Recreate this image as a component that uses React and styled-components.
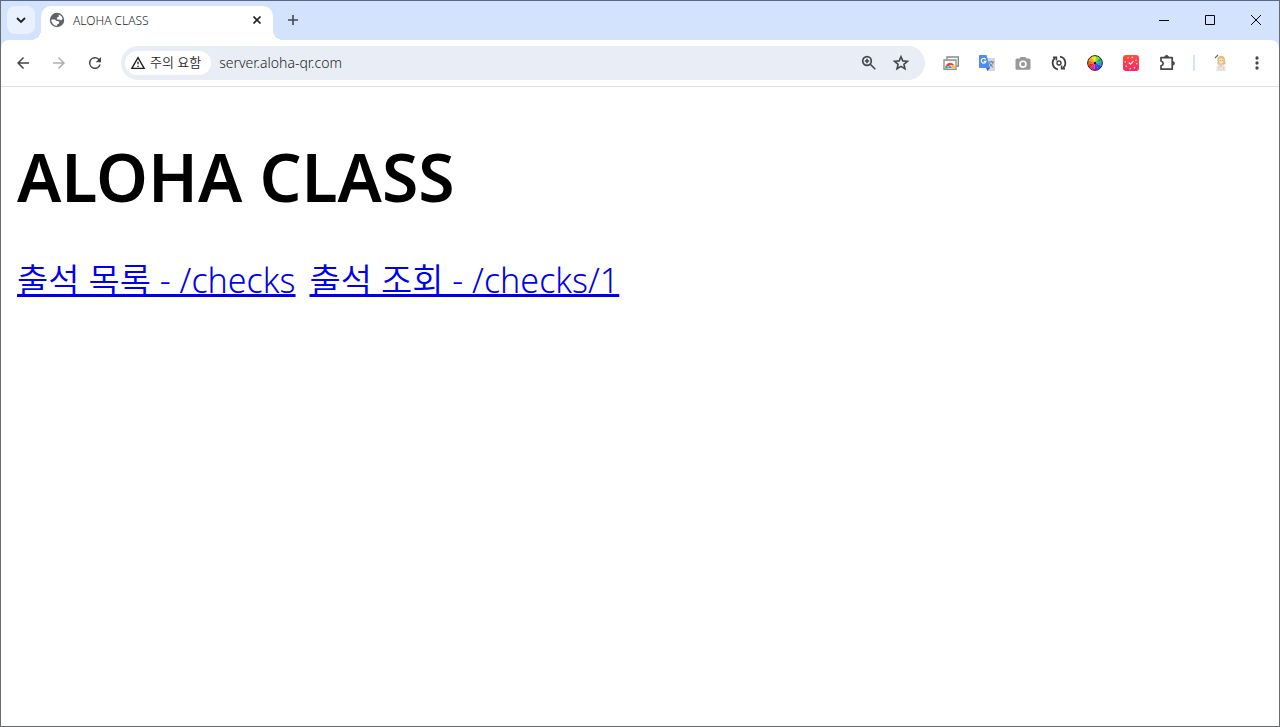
import styled, { createGlobalStyle, css } from 'styled-components';
import { useState } from 'react';

const GlobalStyle = createGlobalStyle`
    *, *::before, *::after {
        box-sizing: border-box;
    }

    body {
        margin: 0;
        background-color: #fff;
        font-family: "Noto Sans", "Noto Sans CJK KR", sans-serif;
    }

    button, input {
        font: inherit;
    }
`;

const Window = styled.div`
    display: flex;
    flex-direction: column;
    min-height: 100vh;
    border: 1px solid #686a70;
    border-top-color: #596788;
    background-color: #d3e3fd;
`;

const TabStrip = styled.header`
    display: flex;
    align-items: flex-start;
    height: 39px;
    padding-left: 6px;
`;

const IconButton = styled.button`
    display: flex;
    flex: none;
    align-items: center;
    justify-content: center;
    width: ${({ $width = 36 }) => $width}px;
    height: ${({ $height = 34 }) => $height}px;
    padding: 0;
    border: 0;
    border-radius: ${({ $radius = 8 }) => $radius}px;
    background-color: ${({ $bg = 'transparent' }) => $bg};
    color: ${({ $color = '#45474b' }) => $color};

    & > svg {
        display: block;
    }
`;

const TabSearch = styled(IconButton)`
    margin-top: 5px;
`;

const foot = css`
    content: "";
    position: absolute;
    bottom: 0;
    width: 10px;
    height: 10px;
`;

const Tab = styled.div`
    position: relative;
    display: flex;
    align-items: center;
    width: 232px;
    height: 34px;
    margin: 5px 0 0 6px;
    padding: 0 6px 6px 8px;
    border-radius: 10px 10px 0 0;
    background-color: #fff;

    &::before {
        ${foot}
        left: -10px;
        background: radial-gradient(circle at 0 0, transparent 10px, #fff 10px);
    }

    &::after {
        ${foot}
        right: -10px;
        background: radial-gradient(circle at 100% 0, transparent 10px, #fff 10px);
    }
`;

const TabTitle = styled.span`
    flex: 1;
    margin-left: 8px;
    padding-top: 2px;
    color: #1f1f1f;
    font-size: 12px;
    font-weight: 350;
    line-height: 20px;
`;

const NewTab = styled(IconButton)`
    margin: 5px 0 0 6px;
`;

const WindowControls = styled.div`
    display: flex;
    margin-left: auto;
`;

const Toolbar = styled.nav`
    display: flex;
    align-items: center;
    padding: 6px 4px;
    border-bottom: 1px solid #dfe1e5;
    border-radius: 8px 8px 0 0;
    background-color: #fff;
`;

const AddressBar = styled.div`
    display: flex;
    flex: 1;
    align-items: center;
    min-width: 0;
    height: 34px;
    margin: 0 8px;
    padding: 0 8px 0 4px;
    border-radius: 17px;
    background-color: #e9eef6;
`;

const SiteStatus = styled.button`
    display: flex;
    flex: none;
    align-items: center;
    gap: 4px;
    height: 24px;
    padding: 0 10px 0 5px;
    border: 0;
    border-radius: 12px;
    background-color: #fff;
    color: #1f1f1f;
    font-size: 13px;
    font-weight: 350;
    line-height: 24px;

    & > span {
        padding-bottom: 2px;
    }
`;

const AddressInput = styled.input`
    flex: 1;
    min-width: 0;
    margin-left: 8px;
    padding: 0;
    border: 0;
    outline: 0;
    background: transparent;
    color: #1f1f1f;
    font-size: 14px;
    font-weight: 350;
    line-height: 20px;
`;

const Divider = styled.span`
    width: 2px;
    height: 16px;
    margin: 0 8px;
    background-color: #d3e3fd;
`;

const Page = styled.main`
    flex: 1;
    padding: 0 16px;
    background-color: #fff;
`;

const Title = styled.h1`
    margin: 46px 0 40px;
    color: #000;
    font-size: 66px;
    font-weight: 600;
    line-height: 86px;
`;

const Links = styled.div`
    display: flex;
    flex-wrap: wrap;
    gap: 14px;
`;

const PageLink = styled.a`
    color: #0000ee;
    font-size: 34px;
    font-weight: 350;
    line-height: 42px;
    text-decoration-thickness: 3px;
    text-underline-offset: 1px;
    text-decoration-skip-ink: none;
`;

const Material = ({ d, size = 18, view = '0 0 24 24' }) => (
    <svg width={size} height={size} viewBox={view} fill="currentColor" aria-hidden="true">
        <path d={d} />
    </svg>
);

const Line = ({ d, size = 16, width = 2 }) => (
    <svg width={size} height={size} viewBox={`0 0 ${size} ${size}`} fill="none"
        stroke="currentColor" strokeWidth={width} aria-hidden="true">
        <path d={d} />
    </svg>
);

const GlobeIcon = () => (
    <svg width="16" height="16" viewBox="0 0 16 16" aria-hidden="true">
        <circle cx="8" cy="8" r="7.2" fill="#5f6368" />
        <path fill="#fff" d="M9.6 2.4c2.2.6 3.7 2.2 4 4.4L12.2 8.4l-1.7-.9-2.1.2-.6-1.5 1-1.2 1.2-.4z" />
        <path fill="#fff" d="M2.3 7.4h3.5L7.7 9l2.6.5-.3 2-1.7.7-.2 1.5c-3.3 0-5.8-2.6-5.8-6.3" />
    </svg>
);

const PhotosIcon = () => (
    <svg width="18" height="18" viewBox="0 0 18 18" fill="none" aria-hidden="true">
        <path d="M5 5.5V3h11.3v9h-2" stroke="#888b8e" strokeWidth="1.4" />
        <path d="M2 6h12v9.3H2z" fill="#fff" stroke="#888b8e" strokeWidth="1.3" />
        <path d="M3.8 11.2a4.9 4.9 0 0 1 8.6 0H8L6.4 13z" fill="#ea4335" />
        <path d="M3.8 11.2a5 5 0 0 0-.5 3.4H6V13z" fill="#34a853" />
        <path d="M12.4 11.2H9.6q.9 1.6.4 3.4h2.8q.4-1.8-.4-3.4" fill="#fbbc04" />
        <path d="M6 14.6a2.1 2.1 0 1 1 4 0z" fill="#4285f4" stroke="#fff" strokeWidth=".5" />
    </svg>
);

const TranslateIcon = () => (
    <svg width="18" height="18" viewBox="0 0 18 18" fill="none" aria-hidden="true">
        <path d="M7 4h9.3q.7 0 .7.7v11.6q0 .7-.7.7H10z" fill="#d5d8dc" />
        <path d="m8 14 4 0-2.4 3z" fill="#3367d6" />
        <path d="M1.8 1h6.7L12 14H1.8q-.8 0-.8-.8V1.8Q1 1 1.8 1" fill="#4c8bf5" />
        <path d="M7.6 5.3A2.4 2.4 0 1 0 8 7.3H5.8" stroke="#fff" strokeWidth="1.2" />
        <path d="M10.5 8H16m-2.8-1v1m1.8.3c-.5 2-2 3.6-3.4 4.5m-.1-3.7c.7 1.7 2 3 3.5 4.1" stroke="#5d7895" />
    </svg>
);

const SyncIcon = () => (
    <svg width="18" height="18" viewBox="0 0 18 18" fill="none" stroke="#3c4043" strokeWidth="1.8" aria-hidden="true">
        <path d="M8 15.3A6.4 6.4 0 0 1 5.2 3.9M10 2.7A6.4 6.4 0 0 1 12.8 14.1" />
        <path d="M3 3.2h3.4v3.4M15 14.8h-3.4v-3.4" strokeWidth="1.6" />
        <circle cx="9" cy="9" r="2" strokeWidth="1.4" />
    </svg>
);

const wheelColors = ['#f9ed20', '#8edb22', '#16b84e', '#18a5dc', '#2749e8', '#702ad8', '#ee2494', '#ef2525', '#f3661d', '#f7a61b'];

const WheelIcon = () => (
    <svg width="18" height="18" viewBox="-9 -9 18 18" aria-hidden="true">
        {wheelColors.map((color, i) => (
            <path key={color} d="M0 0V-7.2A7.2 7.2 0 0 1 4.3-5.8Z" fill={color} transform={`rotate(${i * 36 - 30})`} />
        ))}
        <circle r="7.4" fill="none" stroke="#242424" />
        <circle r="1.2" fill="#171717" />
    </svg>
);

const ClockIcon = () => (
    <svg width="18" height="18" viewBox="0 0 18 18" fill="none" aria-hidden="true">
        <defs>
            <linearGradient id="clock" x1="0" y1="0" x2="0" y2="1">
                <stop stopColor="#ff5038" />
                <stop offset="1" stopColor="#fc2668" />
            </linearGradient>
        </defs>
        <rect x="1" y="1" width="16" height="16" rx="3" fill="url(#clock)" />
        <circle cx="9" cy="9" r="5.8" stroke="#ffe1dd" strokeWidth="1.4" strokeDasharray="1.4 3.155" />
        <path d="m6.8 8.6 1.7 1.6 3-3" stroke="#fff" strokeWidth="1.2" />
    </svg>
);

const PuzzleIcon = () => (
    <svg width="18" height="18" viewBox="0 0 18 18" fill="none" stroke="currentColor" aria-hidden="true">
        <path d="M3 3.6h11.2v11.6H3v-3.4c2.9-.9 2.9-3.9 0-4.8z" strokeWidth="1.7" strokeLinejoin="round" />
        <path d="M6.8 3.2a1.8 1.8 0 0 1 3.6 0zM14.6 7.6a1.8 1.8 0 0 1 0 3.6z" fill="currentColor" />
    </svg>
);

const AvatarIcon = () => (
    <svg width="20" height="20" viewBox="0 0 20 20" fill="none" aria-hidden="true">
        <path d="m4 5 3-3" stroke="#64615f" strokeWidth="1.1" />
        <path d="M6.3 8q-.5-4.8 3.8-5.2 4 .1 4 4.3l.5 3.8-2.5 1H8l-1.5-1z" fill="#dec178" />
        <ellipse cx="10.1" cy="8" rx="2.3" ry="2.8" fill="#ffe0c8" />
        <path d="M8.8 7.6h.8m1.2 0h.8" stroke="#8b6a50" strokeWidth=".8" />
        <path d="m5 18 1.1-5 2.6-1.6 3.2.2 2.2 2 .8 4.4z" fill="#e8e6e4" />
        <path d="m9 10.8 2.5.1-.8 3.3-2.4-.8z" fill="#f4c5ae" />
        <path d="m7 13 1.3 4M13 13l-.7 4" stroke="#d8d4d1" />
    </svg>
);

const extensions = [
    { label: 'Photos', icon: <PhotosIcon /> },
    { label: 'Translate', icon: <TranslateIcon /> },
    {
        label: 'Capture',
        color: '#999',
        icon: <Material d="M9 4 7.4 6H4q-2 0-2 2v11q0 2 2 2h16q2 0 2-2V8q0-2-2-2h-3.4L15 4zm3 4.5a5 5 0 1 1 0 10 5 5 0 0 1 0-10m0 2.2a2.8 2.8 0 1 0 0 5.6 2.8 2.8 0 0 0 0-5.6" />
    },
    { label: 'Sync', icon: <SyncIcon /> },
    { label: 'Colors', icon: <WheelIcon /> },
    { label: 'Clock', icon: <ClockIcon /> },
    { label: 'Extensions', icon: <PuzzleIcon /> }
];

const windowControls = [
    { label: 'Minimize', d: 'M3 8.5h10' },
    { label: 'Maximize', d: 'M3.5 3.5h9v9h-9z' },
    { label: 'Close', d: 'm3 3 10 10M13 3 3 13' }
];

const links = [
    { href: '/checks', text: '출석 목록 - /checks' },
    { href: '/checks/1', text: '출석 조회 - /checks/1' }
];

const App = () => {
    const [address, setAddress] = useState('server.aloha-qr.com');

    return (
        <Window>
            <GlobalStyle />
            <TabStrip>
                <TabSearch aria-label="Search tabs" $width={28} $height={28} $bg="#e9f1fe" $color="#1f1f1f">
                    <Line d="m4 6 4 4 4-4" width={1.8} />
                </TabSearch>
                <Tab>
                    <GlobeIcon />
                    <TabTitle>ALOHA CLASS</TabTitle>
                    <IconButton aria-label="Close tab" $width={20} $height={20} $color="#1f1f1f">
                        <Line d="m4.5 4.5 7 7M11.5 4.5l-7 7" width={1.7} />
                    </IconButton>
                </Tab>
                <NewTab aria-label="New tab" $width={28} $height={28}>
                    <Line d="M3 8h10M8 3v10" width={1.6} />
                </NewTab>
                <WindowControls>
                    {windowControls.map(({ label, d }) => (
                        <IconButton key={label} aria-label={label} $width={46} $height={38} $radius={0} $color="#000">
                            <Line d={d} width={1} />
                        </IconButton>
                    ))}
                </WindowControls>
            </TabStrip>
            <Toolbar>
                <IconButton aria-label="Back">
                    <Material d="M20 11H7.8l5.6-5.6L12 4l-8 8 8 8 1.4-1.4L7.8 13H20z" />
                </IconButton>
                <IconButton aria-label="Forward" $color="#acaeb0">
                    <Material d="m12 4-1.4 1.4 5.6 5.6H4v2h12.2l-5.6 5.6L12 20l8-8z" />
                </IconButton>
                <IconButton aria-label="Reload">
                    <Material d="M17.65 6.35A8 8 0 1 0 19.73 14h-2.08A6 6 0 1 1 12 6c1.66 0 3.14.69 4.22 1.78L13 11h7V4z" />
                </IconButton>
                <AddressBar>
                    <SiteStatus>
                        <Material size={16} d="M1 21h22L12 2zm3.5-2L12 6l7.5 13zM11 16h2v2h-2zm0-6h2v4h-2z" />
                        <span>주의 요함</span>
                    </SiteStatus>
                    <AddressInput
                        aria-label="Address"
                        value={address}
                        onChange={e => setAddress(e.target.value)}
                    />
                    <IconButton aria-label="Zoom" $width={32}>
                        <svg width="18" height="18" viewBox="0 0 18 18" fill="none" stroke="currentColor" aria-hidden="true">
                            <circle cx="7" cy="7" r="4.3" strokeWidth="1.7" />
                            <path d="m10.3 10.3 5 5M4.8 7h4.4M7 4.8v4.4" strokeWidth="1.6" />
                        </svg>
                    </IconButton>
                    <IconButton aria-label="Bookmark" $width={32}>
                        <Line size={18} width={1.6} d="m9 2.7 1.8 4.2 4.6.4-3.5 3 1.1 4.5L9 12.4l-4 2.4 1.1-4.5-3.5-3 4.6-.4z" />
                    </IconButton>
                </AddressBar>
                {extensions.map(({ label, color, icon }) => (
                    <IconButton key={label} aria-label={label} $color={color}>{icon}</IconButton>
                ))}
                <Divider />
                <IconButton aria-label="Profile"><AvatarIcon /></IconButton>
                <IconButton aria-label="Menu">
                    <Material size={20} d="M12 8a2 2 0 1 0 0-4 2 2 0 0 0 0 4m0 2a2 2 0 1 0 0 4 2 2 0 0 0 0-4m0 6a2 2 0 1 0 0 4 2 2 0 0 0 0-4" />
                </IconButton>
            </Toolbar>
            <Page>
                <Title>ALOHA CLASS</Title>
                <Links>
                    {links.map(({ href, text }) => (
                        <PageLink key={href} href={href}>{text}</PageLink>
                    ))}
                </Links>
            </Page>
        </Window>
    );
};

export default App;
